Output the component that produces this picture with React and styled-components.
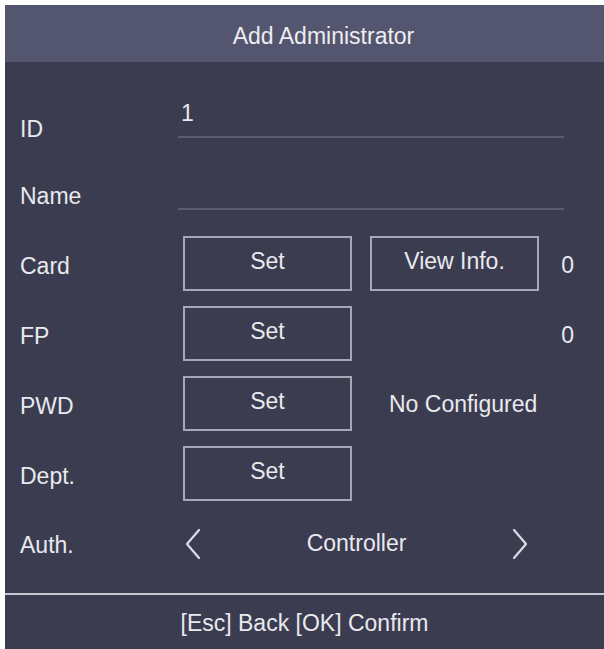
import React from "react";
import styled, { createGlobalStyle } from "styled-components";

const Global = createGlobalStyle`
  html, body { margin: 0; padding: 0; background: #ffffff; }
  body { font-family: "Liberation Sans", Arial, sans-serif; }
  * { box-sizing: border-box; }
`;

const Screen = styled.div`
  margin: 5px 0 0 5px;
  width: 599px;
  height: 644px;
  background: #3b3c50;
  display: flex;
  flex-direction: column;
  color: #e9e9ee;
  font-size: 23px;
  overflow: hidden;
`;

const Header = styled.header`
  height: 57px;
  flex: none;
  background: #54566f;
  display: flex;
  align-items: center;
  justify-content: center;
  padding: 5px 0 0 38px;
  color: #ededf2;
`;

const Body = styled.main`
  flex: 1;
  padding: 38px 0 0 15px;
  display: flex;
  flex-direction: column;
`;

const Row = styled.div`
  display: grid;
  grid-template-columns: 145px 169px 169px 1fr;
  column-gap: 18px;
  align-items: center;
  height: ${(p) => p.$h || 55}px;
  margin-bottom: ${(p) => p.$gap ?? 15}px;
`;

const Label = styled.div`
  padding-top: ${(p) => p.$offset ?? 6}px;
  grid-column: 1;
`;

const Field = styled.div`
  grid-column: 2 / 5;
  align-self: start;
  margin-left: -5px;
  margin-right: 40px;
  height: ${(p) => p.$h}px;
  border-bottom: 2px solid #5b5c71;
  padding: 0 0 0 3px;
  line-height: 26px;
`;

const Button = styled.div`
  height: 100%;
  border: 2px solid #a7a8b6;
  display: flex;
  align-items: center;
  justify-content: center;
  padding-bottom: 4px;
`;

const Count = styled.div`
  text-align: right;
  padding-right: 30px;
  padding-top: 4px;
`;

const Status = styled.div`
  grid-column: 3 / 5;
  padding-left: 19px;
  padding-top: 2px;
`;

const Selector = styled.div`
  grid-column: 2 / 5;
  display: flex;
  align-items: center;
  justify-content: space-between;
  width: 347px;
  padding: 0 2px;
`;

const Value = styled.span`
  padding-bottom: 2px;
`;

const Footer = styled.footer`
  height: 56px;
  flex: none;
  border-top: 2px solid #c8c9d2;
  display: flex;
  align-items: center;
  justify-content: center;
  padding-top: 2px;
`;

const Chevron = ({ dir }) => (
  <svg width="16" height="32" viewBox="0 0 16 32" fill="none">
    <path
      d={dir === "left" ? "M14 2 L2 16 L14 30" : "M2 2 L14 16 L2 30"}
      stroke="#dcdce3"
      strokeWidth="2.2"
      strokeLinecap="round"
      strokeLinejoin="round"
    />
  </svg>
);

export default function App() {
  return (
    <>
      <Global />
      <Screen>
        <Header>Add Administrator</Header>
        <Body>
          <Row $h={54} $gap={15}>
            <Label $offset={4}>ID</Label>
            <Field $h={38}>1</Field>
          </Row>
          <Row $h={54} $gap={13}>
            <Label $offset={0}>Name</Label>
            <Field $h={41} />
          </Row>
          <Row>
            <Label>Card</Label>
            <Button>Set</Button>
            <Button>View Info.</Button>
            <Count>0</Count>
          </Row>
          <Row>
            <Label>FP</Label>
            <Button>Set</Button>
            <span />
            <Count>0</Count>
          </Row>
          <Row>
            <Label>PWD</Label>
            <Button>Set</Button>
            <Status>No Configured</Status>
          </Row>
          <Row>
            <Label>Dept.</Label>
            <Button>Set</Button>
          </Row>
          <Row $h={56} $gap={0}>
            <Label $offset={2}>Auth.</Label>
            <Selector>
              <Chevron dir="left" />
              <Value>Controller</Value>
              <Chevron dir="right" />
            </Selector>
          </Row>
        </Body>
        <Footer>[Esc] Back [OK] Confirm</Footer>
      </Screen>
    </>
  );
}
